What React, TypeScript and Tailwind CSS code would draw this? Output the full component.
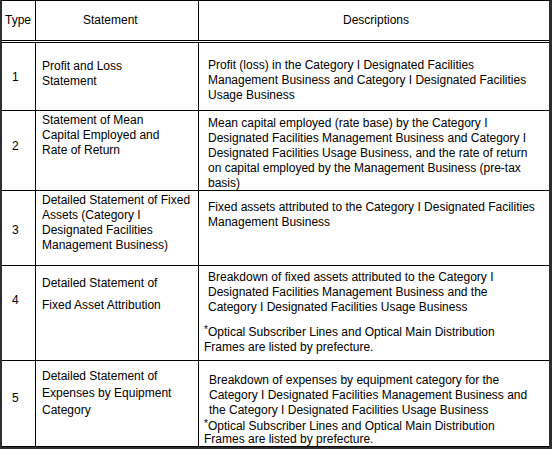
import React from "react";

type Row = {
  type: string;
  height: number;
  typeTop: string;
  statement: React.ReactNode;
  description: React.ReactNode;
};

const font = { fontFamily: '"Liberation Sans", Arial, sans-serif' };

function Lines({ lines, className = "" }: { lines: string[]; className?: string }) {
  return (
    <div className={className}>
      {lines.map((l) => (
        <div key={l} className="whitespace-nowrap">
          {l}
        </div>
      ))}
    </div>
  );
}

function Note({ className = "" }: { className?: string }) {
  return (
    <div className={`pl-[3px] ${className}`}>
      <div className="whitespace-nowrap">
        <span className="relative -top-[3px] text-[10px]">*</span>Optical Subscriber Lines and Optical Main Distribution
      </div>
      <div className="whitespace-nowrap">Frames are listed by prefecture.</div>
    </div>
  );
}

const rows: Row[] = [
  {
    type: "1",
    height: 68,
    typeTop: "pt-[27px]",
    statement: <Lines className="pt-[16px]" lines={["Profit and Loss", "Statement"]} />,
    description: (
      <Lines
        className="pl-[7px] pt-[15px]"
        lines={[
          "Profit (loss) in the Category I Designated Facilities",
          "Management Business and Category I Designated Facilities",
          "Usage Business",
        ]}
      />
    ),
  },
  {
    type: "2",
    height: 80,
    typeTop: "pt-[28px]",
    statement: (
      <Lines
        className="pt-[2px]"
        lines={["Statement of Mean", "Capital Employed and", "Rate of Return"]}
      />
    ),
    description: (
      <Lines
        className="pl-[7px] pt-[5px]"
        lines={[
          "Mean capital employed (rate base) by the Category I",
          "Designated Facilities Management Business and Category I",
          "Designated Facilities Usage Business, and the rate of return",
          "on capital employed by the Management Business (pre-tax",
          "basis)",
        ]}
      />
    ),
  },
  {
    type: "3",
    height: 75,
    typeTop: "pt-[32px]",
    statement: (
      <Lines
        className="pt-[2px]"
        lines={[
          "Detailed Statement of Fixed",
          "Assets (Category I",
          "Designated Facilities",
          "Management Business)",
        ]}
      />
    ),
    description: (
      <Lines
        className="pl-[7px] pt-[9px]"
        lines={[
          "Fixed assets attributed to the Category I Designated Facilities",
          "Management Business",
        ]}
      />
    ),
  },
  {
    type: "4",
    height: 95,
    typeTop: "pt-[27px]",
    statement: (
      <div className="pt-[10px]">
        <div className="whitespace-nowrap">Detailed Statement of</div>
        <div className="mt-[7px] whitespace-nowrap">Fixed Asset Attribution</div>
      </div>
    ),
    description: (
      <div className="pt-[4px]">
        <Lines
          className="pl-[7px]"
          lines={[
            "Breakdown of fixed assets attributed to the Category I",
            "Designated Facilities Management Business and the",
            "Category I Designated Facilities Usage Business",
          ]}
        />
        <Note className="mt-[10px] leading-[14px]" />
      </div>
    ),
  },
  {
    type: "5",
    height: 86,
    typeTop: "pt-[30px]",
    statement: (
      <Lines
        className="pt-[7px] leading-[17px]"
        lines={["Detailed Statement of", "Expenses by Equipment", "Category"]}
      />
    ),
    description: (
      <div className="pt-[12px]">
        <Lines
          className="pl-[8px]"
          lines={[
            "Breakdown of expenses by equipment category for the",
            "Category I Designated Facilities Management Business and",
            "the Category I Designated Facilities Usage Business",
          ]}
        />
        <Note className="mt-[2px] leading-[13px]" />
      </div>
    ),
  },
];

export default function App() {
  return (
    <div
      className="h-[449px] w-[552px] overflow-hidden bg-white text-[12px] leading-[15px] text-black"
      style={font}
    >
      <div className="flex h-full flex-col border-t border-l-2 border-r-[3px] border-b-[3px] border-[#2e2e2e] border-t-black">
        {/* header */}
        <div className="flex h-[42px] shrink-0 border-b-[3px] border-double border-black">
          <div className="flex w-[34px] shrink-0 items-center border-r border-black pl-[3px]">
            Type
          </div>
          <div className="flex w-[163px] shrink-0 items-center border-r border-black pl-[47px]">
            Statement
          </div>
          <div className="flex flex-1 items-center pl-[144px]">Descriptions</div>
        </div>

        {rows.map((r) => (
          <div
            key={r.type}
            className="flex shrink-0 border-b border-black"
            style={{ height: r.height }}
          >
            <div className={`w-[34px] shrink-0 border-r border-black pl-[10px] ${r.typeTop}`}>
              {r.type}
            </div>
            <div className="w-[163px] shrink-0 border-r border-black pl-[6px]">
              {r.statement}
            </div>
            <div className="min-w-0 flex-1 pl-[2px]">{r.description}</div>
          </div>
        ))}
      </div>
    </div>
  );
}
